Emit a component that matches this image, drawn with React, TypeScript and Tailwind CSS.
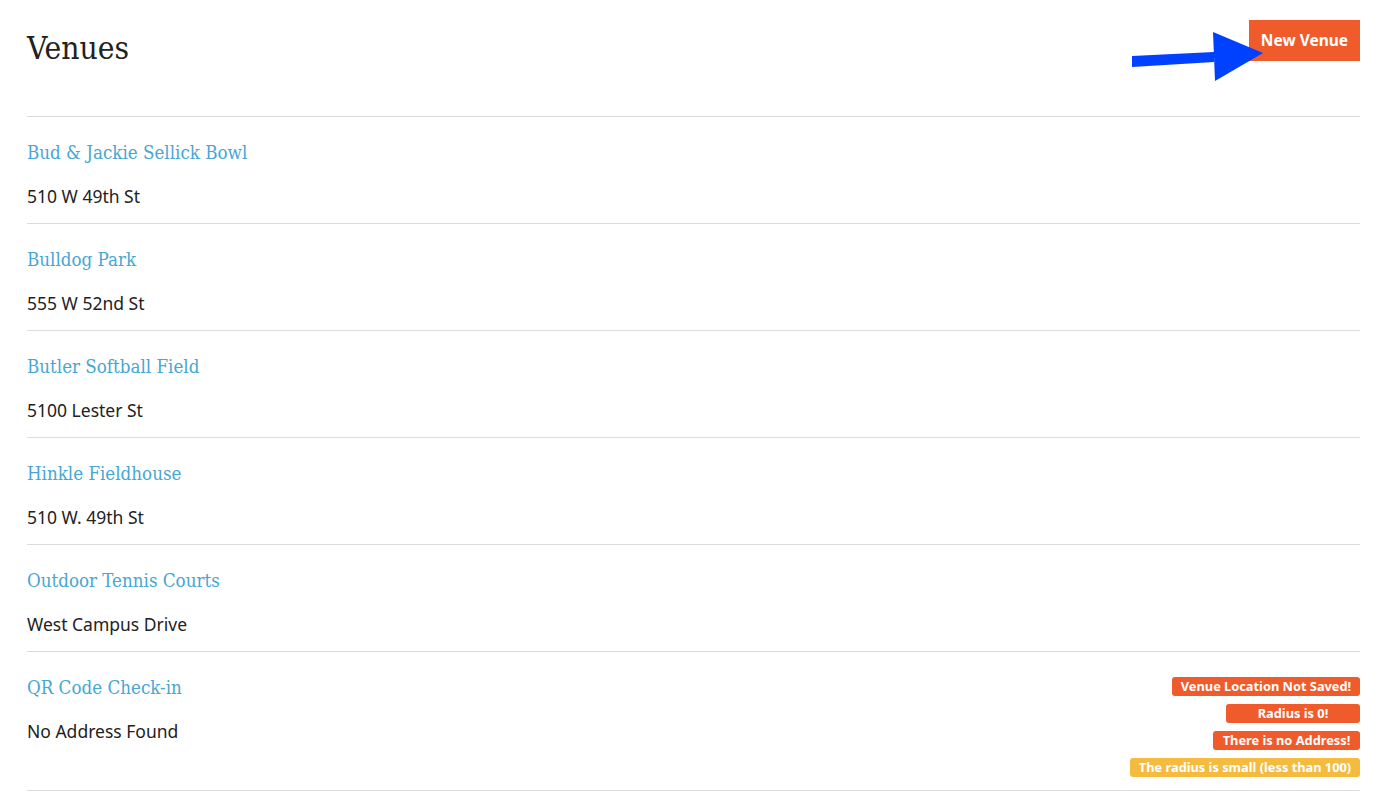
const slab = { fontFamily: '"DejaVu Serif Condensed", "DejaVu Serif", serif' };
const sans = { fontFamily: '"Noto Sans", Lato, sans-serif' };

type Venue = { name: string; address: string; badges?: { text: string; width: string; color: string }[] };

const venues: Venue[] = [
  { name: "Bud & Jackie Sellick Bowl", address: "510 W 49th St" },
  { name: "Bulldog Park", address: "555 W 52nd St" },
  { name: "Butler Softball Field", address: "5100 Lester St" },
  { name: "Hinkle Fieldhouse", address: "510 W. 49th St" },
  { name: "Outdoor Tennis Courts", address: "West Campus Drive" },
  {
    name: "QR Code Check-in",
    address: "No Address Found",
    badges: [
      { text: "Venue Location Not Saved!", width: "w-[188px]", color: "bg-[#ef5b2b]" },
      { text: "Radius is 0!", width: "w-[134px]", color: "bg-[#ef5b2b]" },
      { text: "There is no Address!", width: "w-[147px]", color: "bg-[#ef5b2b]" },
      { text: "The radius is small (less than 100)", width: "w-[230px]", color: "bg-[#f5bb3f]" },
    ],
  },
];

function VenueRow({ venue }: { venue: Venue }) {
  return (
    <div className={`flex justify-between border-t border-[#dcdcdc] pt-[25px] ${venue.badges ? "pb-[13px]" : "h-[107px]"}`}>
      <div>
        <a className="block text-[18.6px] leading-[22px] text-[#47a6d3]" style={slab} href="#">
          {venue.name}
        </a>
        <p className="mt-[21px] text-[17.5px] leading-[22px] text-[#222]" style={sans}>
          {venue.address}
        </p>
      </div>
      {venue.badges && (
        <div className="flex flex-col items-end gap-[8px]">
          {venue.badges.map((b) => (
            <span
              key={b.text}
              className={`${b.width} ${b.color} h-[19px] rounded-[3px] text-center text-[12.8px] font-bold leading-[19px] text-white`}
              style={sans}
            >
              {b.text}
            </span>
          ))}
        </div>
      )}
    </div>
  );
}

export default function App() {
  return (
    <div className="min-h-screen bg-white pl-[27px] pr-[30px] pt-[20px]">
      {/* Header */}
      <div className="relative flex h-[96px] items-start justify-between">
        <h1 className="mt-[8px] text-[31.5px] leading-[40px] text-[#222]" style={slab}>
          Venues
        </h1>
        <button className="h-[41px] w-[111px] bg-[#ef5b2b] text-[15.5px] font-bold text-white" style={sans}>
          New Venue
        </button>
        {/* annotation arrow */}
        <svg className="pointer-events-none absolute left-[1073px] top-[-20px]" width="180" height="110" viewBox="1100 0 180 110">
          <polygon points="1132,56 1214,52 1214,62 1132,67" fill="#0040ff" />
          <polygon points="1213,32 1263,53 1215,81" fill="#0040ff" />
        </svg>
      </div>

      {venues.map((v) => (
        <VenueRow key={v.name} venue={v} />
      ))}
      <div className="border-t border-[#dcdcdc]" />
    </div>
  );
}
